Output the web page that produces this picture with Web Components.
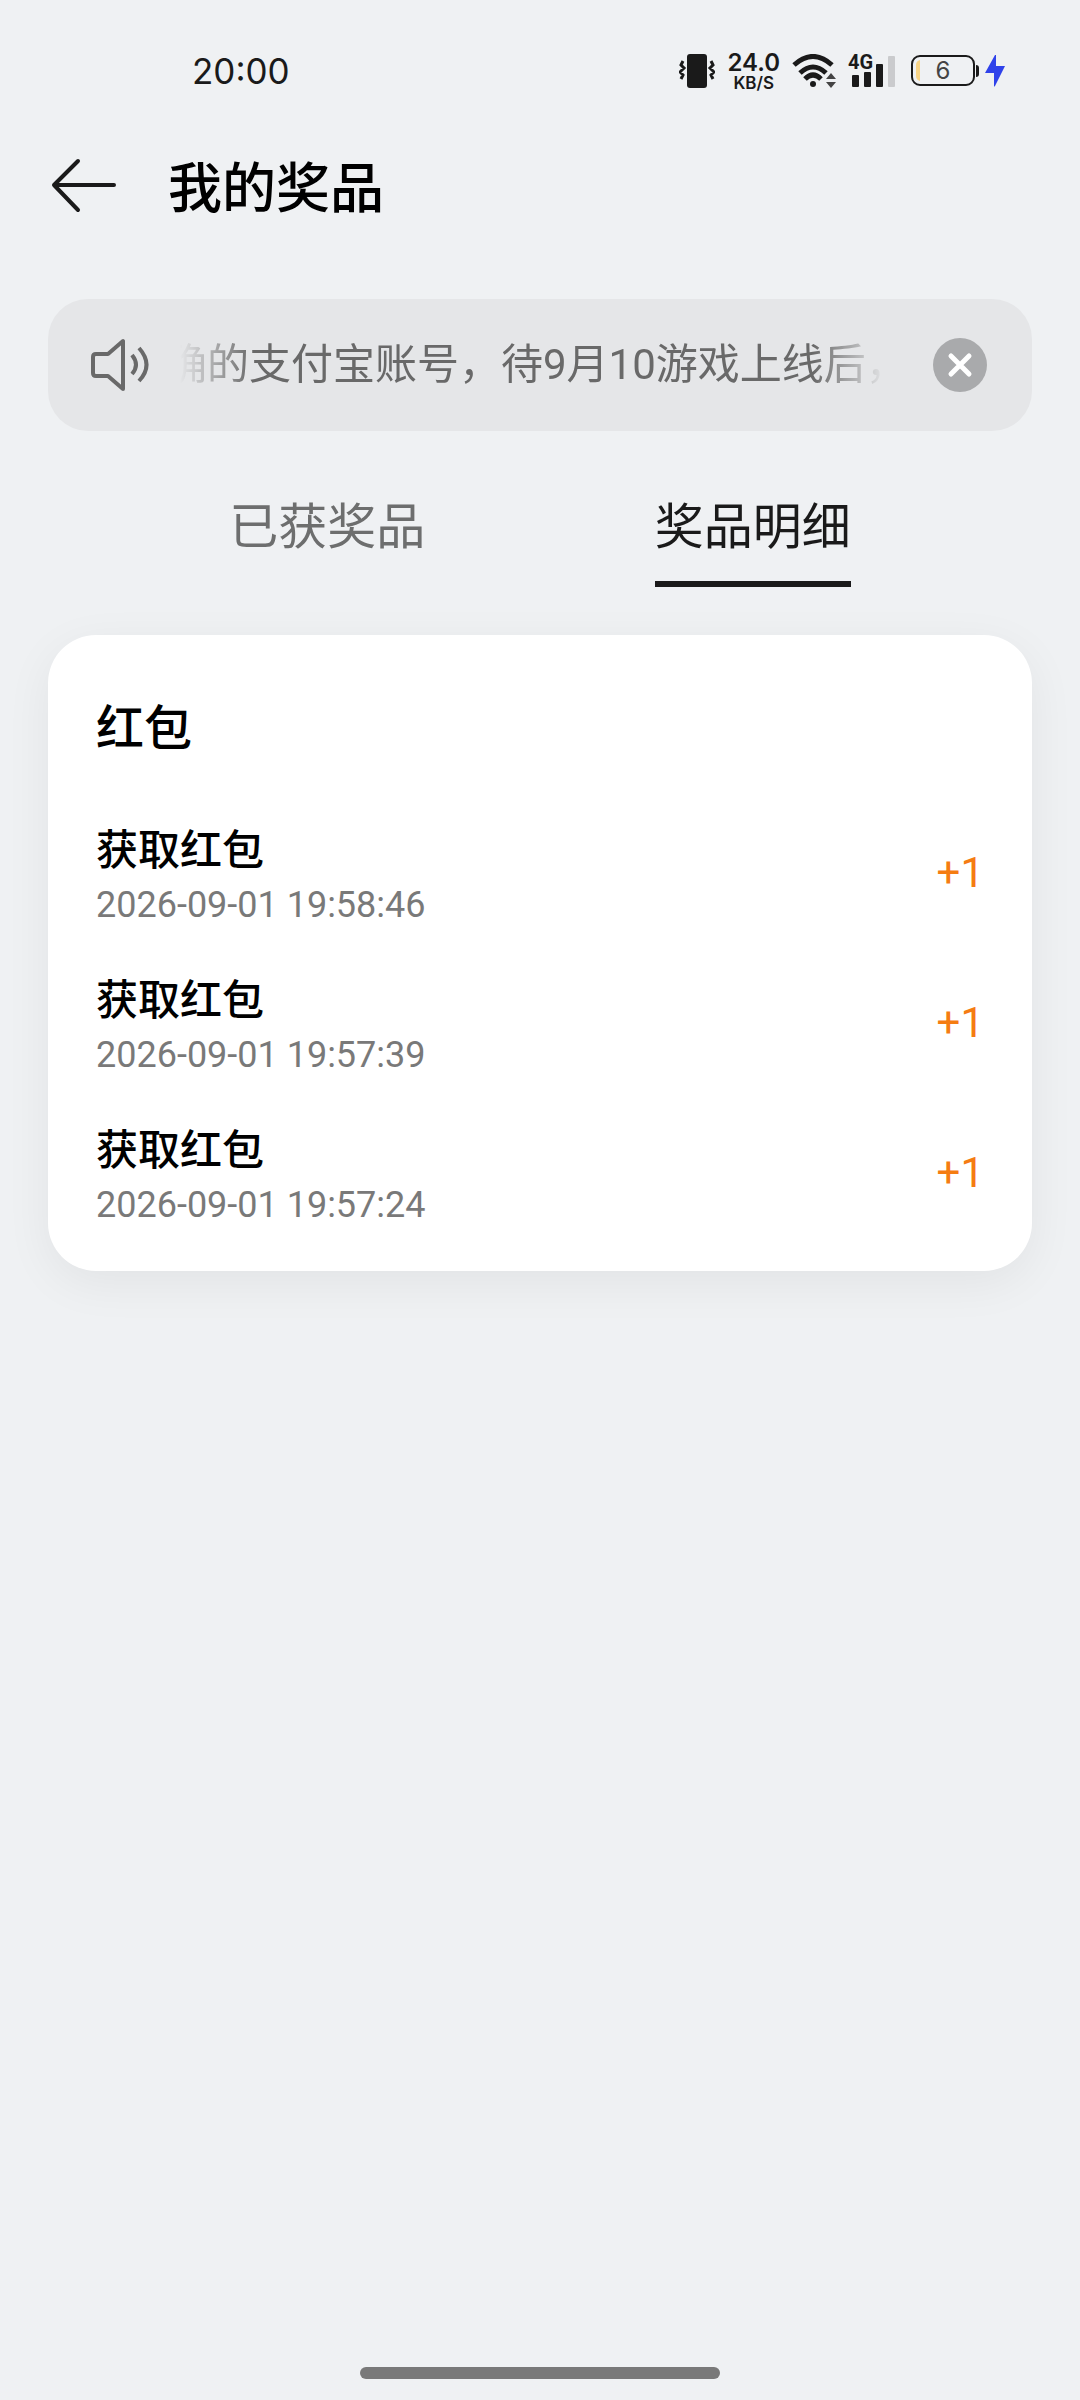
<!DOCTYPE html>
<html lang="zh-CN">

<head>
    <meta charset="UTF-8">
    <meta name="viewport" content="width=device-width, initial-scale=1.0">
    <title>我的奖品</title>
    <style>
        body {
            margin: 0;
            background: #eff1f3;
            color: #000;
            font-family: Roboto, "Noto Sans CJK SC", sans-serif;
        }
    </style>
</head>

<body>
    <prize-page>
        <status-bar slot="status" time="20:00" speed="24.0" battery="6"></status-bar>
        <page-header slot="header">我的奖品</page-header>
        <notice-bar>确的支付宝账号，待9月10游戏上线后，</notice-bar>
        <tab-bar>
            <tab-item>已获奖品</tab-item>
            <tab-item selected>奖品明细</tab-item>
        </tab-bar>
        <prize-card heading="红包">
            <prize-row time="2026-09-01 19:58:46" amount="+1">获取红包</prize-row>
            <prize-row time="2026-09-01 19:57:39" amount="+1">获取红包</prize-row>
            <prize-row time="2026-09-01 19:57:24" amount="+1">获取红包</prize-row>
        </prize-card>
    </prize-page>

    <template id="page-template">
        <style>
            :host {
                display: flex;
                flex-direction: column;
                min-height: 100vh;
            }
            main {
                display: flex;
                flex-direction: column;
                padding: 65px 48px;
            }
            .home {
                align-self: center;
                width: 33.333%;
                height: 12px;
                margin: auto 0 21px;
                border-radius: 6px;
                background: #797979;
            }
        </style>
        <slot name="status"></slot>
        <slot name="header"></slot>
        <main><slot></slot></main>
        <div class="home"></div>
    </template>

    <template id="status-template">
        <style>
            :host {
                display: flex;
                align-items: center;
                justify-content: space-between;
                height: 142px;
                padding: 0 75px 0 192px;
                color: #1a1a1a;
                font-family: Inter, sans-serif;
            }
            svg { display: block; }
            .time { font-size: 35px; }
            .icons {
                display: flex;
                align-items: center;
                gap: 12px;
            }
            .speed {
                display: flex;
                flex-direction: column;
                align-items: center;
                padding-top: 2px;
                font-weight: 600;
                font-size: 24px;
                line-height: 22px;
            }
            .speed small {
                font-size: 17px;
                line-height: 18px;
            }
            .signal, .battery { position: relative; }
            .signal { margin-right: 4px; }
            .signal span {
                position: absolute;
                left: 0;
                top: 0;
                font: 700 20px/16px Roboto, sans-serif;
            }
            .battery {
                display: flex;
                align-items: center;
                gap: 6px;
            }
            .battery span {
                position: absolute;
                left: 0;
                top: 0;
                width: 64px;
                font-size: 24px;
                line-height: 32px;
                text-align: center;
                color: #444;
            }
        </style>
        <span class="time"></span>
        <div class="icons">
            <svg width="36" height="36" viewBox="0 0 36 36" fill="none" stroke="#1a1a1a" stroke-width="3">
                <rect x="8" y="1" width="20" height="34" rx="3" fill="#1a1a1a" stroke="none"/>
                <path d="M4 8l-2 4 3 3-4 4 3 3-2 4M32 8l2 4-3 3 4 4-3 3 2 4"/>
            </svg>
            <div class="speed"><span class="rate"></span><small>KB/S</small></div>
            <svg width="44" height="34" viewBox="0 0 44 34" fill="none" stroke="#1a1a1a" stroke-width="5">
                <path d="M2 11Q21-6 40 11M8 19Q21 7 34 19M13 25Q21 17 29 25"/>
                <circle cx="21" cy="30" r="3" fill="#1a1a1a" stroke="none"/>
                <path d="M34 25l5-6 5 6zM34 28l5 6 5-6z" fill="#444" stroke="none"/>
            </svg>
            <div class="signal">
                <svg width="47" height="34" viewBox="0 0 47 34" fill="#1a1a1a">
                    <rect x="4" y="21" width="7" height="12" rx="1"/>
                    <rect x="16" y="18" width="7" height="15" rx="1"/>
                    <rect x="28" y="10" width="7" height="23" rx="1"/>
                    <rect x="40" y="2" width="7" height="31" rx="1" fill="#cacbcd"/>
                </svg>
                <span>4G</span>
            </div>
            <div class="battery">
                <svg width="68" height="32" viewBox="0 0 68 32">
                    <rect x="1" y="1" width="62" height="29" rx="8" fill="none" stroke="#1a1a1a" stroke-width="2"/>
                    <path d="M9 5v21q-4-1-4-5v-11q0-4 4-5z" fill="#f8d486"/>
                    <path d="M65 10q3 0 3 3v6q0 3-3 3z" fill="#1a1a1a"/>
                </svg>
                <svg width="20" height="32" viewBox="0 0 20 32">
                    <path d="M10 0L0 18h9v13q0 1 1 0L20 11h-9V0z" fill="#2f42ea"/>
                </svg>
                <span class="level"></span>
            </div>
        </div>
    </template>

    <template id="header-template">
        <style>
            :host {
                display: flex;
                align-items: center;
                gap: 48px;
                height: 92px;
                padding: 0 48px;
            }
            button {
                padding: 0;
                border: 0;
                background: none;
            }
            svg { display: block; }
            h1 {
                margin: 0;
                padding-top: 4px;
                font-size: 54px;
                font-weight: 500;
                line-height: 80px;
            }
        </style>
        <button type="button" aria-label="返回">
            <svg width="72" height="72" viewBox="0 0 72 72" fill="none" stroke="#1a1a1a" stroke-width="4" stroke-linecap="round" stroke-linejoin="round">
                <path d="M66 33H6M30 9L6 33l24 25"/>
            </svg>
        </button>
        <h1><slot></slot></h1>
    </template>

    <template id="notice-template">
        <style>
            :host {
                display: flex;
                align-items: center;
                height: 132px;
                padding: 0 45px 0 42px;
                border-radius: 40px;
                background: #e5e6e8;
                color: #696969;
            }
            svg { display: block; flex: none; }
            /* 两端渐隐的滚动文字 */
            p {
                flex: 1;
                min-width: 0;
                margin: 0 48px 0 30px;
                overflow: hidden;
                white-space: nowrap;
                font-size: 42px;
                line-height: 64px;
                text-indent: -15px;
                -webkit-mask-image: linear-gradient(to right, transparent, #000 72px, #000 calc(100% - 72px), transparent);
                mask-image: linear-gradient(to right, transparent, #000 72px, #000 calc(100% - 72px), transparent);
            }
            button {
                padding: 0;
                border: 0;
                background: none;
            }
        </style>
        <svg width="60" height="54" viewBox="0 0 60 54" fill="none" stroke="#696969" stroke-width="4" stroke-linejoin="round">
            <path d="M6 16h12L33 3v48L18 38H6q-3 0-3-3V19q0-3 3-3z"/>
            <path d="M42 17q8 10 0 19M49 10q15 17 0 33"/>
        </svg>
        <p><slot></slot></p>
        <button type="button" aria-label="关闭">
            <svg width="54" height="54" viewBox="0 0 54 54">
                <circle cx="27" cy="27" r="27" fill="#a9aaac"/>
                <path d="M18 18l18 18M36 18L18 36" stroke="#fff" stroke-width="5" stroke-linecap="round"/>
            </svg>
        </button>
    </template>

    <template id="tabs-template">
        <style>
            :host {
                display: flex;
                justify-content: space-evenly;
                margin: 60px -48px 48px;
            }
        </style>
        <slot></slot>
    </template>

    <template id="tab-template">
        <style>
            :host { display: block; }
            button {
                display: block;
                padding: 0 0 16px;
                border: 0;
                border-bottom: 6px solid transparent;
                background: none;
                color: #6d6e6e;
                font: inherit;
                font-size: 49px;
                line-height: 74px;
            }
            :host([selected]) button {
                border-color: #1a1a1a;
                color: #1a1a1a;
            }
        </style>
        <button type="button"><slot></slot></button>
    </template>

    <template id="card-template">
        <style>
            :host {
                display: block;
                padding: 62px 48px 44px;
                border-radius: 48px;
                background: #fff;
                box-shadow: 0 12px 48px rgba(0, 0, 0, .06);
            }
            h2 {
                margin: 0 0 58px;
                font-size: 48px;
                font-weight: 500;
                line-height: 64px;
            }
            .rows {
                display: grid;
                gap: 42px;
            }
        </style>
        <h2></h2>
        <div class="rows"><slot></slot></div>
    </template>

    <template id="row-template">
        <style>
            :host {
                display: flex;
                align-items: center;
                justify-content: space-between;
            }
            .name {
                font-size: 42px;
                font-weight: 500;
                line-height: 64px;
            }
            time {
                display: block;
                color: #797979;
                font-size: 36px;
                line-height: 44px;
            }
            .amount {
                color: #f57c12;
                font-size: 42px;
                line-height: 48px;
            }
        </style>
        <div>
            <div class="name"><slot></slot></div>
            <time></time>
        </div>
        <span class="amount"></span>
    </template>

    <script>
        class TemplateElement extends HTMLElement {
            connectedCallback() {
                if (this.shadowRoot) return;
                const template = document.getElementById(this.constructor.template);
                this.attachShadow({ mode: 'open' });
                this.shadowRoot.append(template.content.cloneNode(true));
                this.render();
            }

            // 把属性的值写到对应的节点里
            fill(selector, name) {
                this.shadowRoot.querySelector(selector).textContent = this.getAttribute(name);
            }

            render() {}
        }

        class PrizePage extends TemplateElement {
            static template = 'page-template';
        }

        class StatusBar extends TemplateElement {
            static template = 'status-template';
            render() {
                this.fill('.time', 'time');
                this.fill('.rate', 'speed');
                this.fill('.level', 'battery');
            }
        }

        class PageHeader extends TemplateElement {
            static template = 'header-template';
            render() {
                this.shadowRoot.querySelector('button').addEventListener('click', () => history.back());
            }
        }

        class NoticeBar extends TemplateElement {
            static template = 'notice-template';
            render() {
                this.shadowRoot.querySelector('button').addEventListener('click', () => this.remove());
            }
        }

        class TabBar extends TemplateElement {
            static template = 'tabs-template';
            render() {
                this.addEventListener('click', (e) => {
                    const tab = e.target.closest('tab-item');
                    if (!tab) return;
                    this.querySelectorAll('tab-item').forEach((el) => {
                        el.toggleAttribute('selected', el === tab);
                    });
                });
            }
        }

        class TabItem extends TemplateElement {
            static template = 'tab-template';
        }

        class PrizeCard extends TemplateElement {
            static template = 'card-template';
            render() {
                this.fill('h2', 'heading');
            }
        }

        class PrizeRow extends TemplateElement {
            static template = 'row-template';
            render() {
                this.fill('time', 'time');
                this.fill('.amount', 'amount');
            }
        }

        customElements.define('prize-page', PrizePage);
        customElements.define('status-bar', StatusBar);
        customElements.define('page-header', PageHeader);
        customElements.define('notice-bar', NoticeBar);
        customElements.define('tab-bar', TabBar);
        customElements.define('tab-item', TabItem);
        customElements.define('prize-card', PrizeCard);
        customElements.define('prize-row', PrizeRow);
    </script>
</body>

</html>
